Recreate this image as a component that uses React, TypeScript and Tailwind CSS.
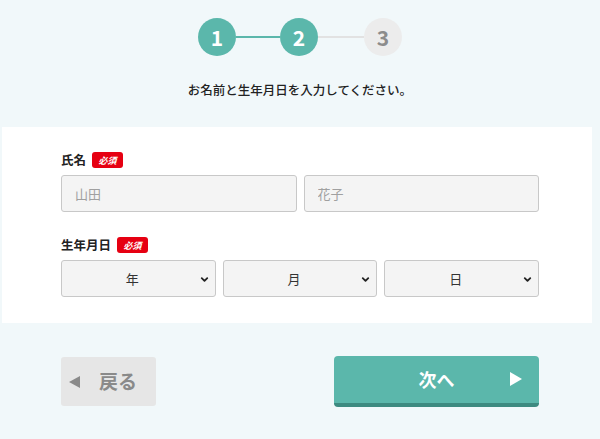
import { ChevronDown } from 'lucide-react'

const FONT = "font-['Noto_Sans_CJK_JP','Noto_Sans',sans-serif]"

function Step({ n, active }: { n: number; active: boolean }) {
  return (
    <div
      className={`w-[38px] h-[38px] rounded-full flex items-center justify-center text-[21px] font-bold leading-none ${
        active ? 'bg-[#5bb7ab] text-white' : 'bg-[#ececec] text-[#8c8c8c]'
      }`}
    >
      {n}
    </div>
  )
}

function Badge() {
  return (
    <span className="inline-flex items-center justify-center h-[16px] w-[31px] rounded-[3px] bg-[#e60012] text-white text-[9px] font-bold italic leading-none">
      必須
    </span>
  )
}

function Select({ label }: { label: string }) {
  return (
    <div className="relative flex-1">
      <select className="w-full h-[37px] appearance-none rounded-[3px] border border-[#c8c8c8] bg-[#f4f4f4] pr-[12px] text-[13px] text-[#333] text-center [text-align-last:center] outline-none">
        <option>{label}</option>
      </select>
      <ChevronDown
        size={11}
        strokeWidth={4}
        className="absolute right-[6px] top-[14px] text-[#222] pointer-events-none"
      />
    </div>
  )
}

export default function App() {
  return (
    <div className={`w-[600px] h-[439px] bg-[#f1f8fa] ${FONT} text-[#222] flex flex-col`}>
      <div className="pt-[18px] flex items-center justify-center">
        <Step n={1} active />
        <div className="w-[44px] h-[2px] bg-[#5bb7ab]" />
        <Step n={2} active />
        <div className="w-[46px] h-[2px] bg-[#e2e2e2]" />
        <Step n={3} active={false} />
      </div>
      <p className="mt-[25px] text-center text-[12.5px] font-medium leading-[18px]">
        お名前と生年月日を入力してください。
      </p>

      <div className="mt-[28px] ml-[2px] mr-[8px] h-[196px] bg-white pl-[59px] pr-[53px] pt-[24px]">
        <div className="flex items-center gap-[6px] h-[18px]">
          <span className="text-[12.5px] font-bold">氏名</span>
          <Badge />
        </div>
        <div className="mt-[6px] flex gap-[7px]">
          <input
            placeholder="山田"
            className="flex-1 min-w-0 h-[37px] rounded-[3px] border border-[#c8c8c8] bg-[#f4f4f4] px-[13px] text-[13px] placeholder:text-[#a0a0a0] outline-none"
          />
          <input
            placeholder="花子"
            className="flex-1 min-w-0 h-[37px] rounded-[3px] border border-[#c8c8c8] bg-[#f4f4f4] px-[13px] text-[13px] placeholder:text-[#a0a0a0] outline-none"
          />
        </div>

        <div className="mt-[24px] flex items-center gap-[6px] h-[18px]">
          <span className="text-[12.5px] font-bold">生年月日</span>
          <Badge />
        </div>
        <div className="mt-[6px] flex gap-[7px]">
          <Select label="年" />
          <Select label="月" />
          <Select label="日" />
        </div>
      </div>

      <div className="mt-[33px] pl-[61px] pr-[61px] flex items-start justify-between">
        <button className="mt-[1px] w-[95px] h-[49px] rounded-[3px] bg-[#e6e6e6] text-[#8a8a8a] flex items-center pl-[8px]">
          <svg width="11" height="12" viewBox="0 0 11 12" className="mr-[19px]">
            <polygon points="11,0 11,12 0,6" fill="#8a8a8a" />
          </svg>
          <span className="text-[19px] font-bold">戻る</span>
        </button>
        <button className="relative w-[205px] h-[51px] rounded-[4px] bg-[#5bb7ab] border-b-[4px] border-[#3d8a80] text-white flex items-center justify-center">
          <span className="text-[18px] font-bold">次へ</span>
          <svg width="12" height="14" viewBox="0 0 12 14" className="absolute right-[17px] top-[16px]">
            <polygon points="0,0 12,7 0,14" fill="#ffffff" />
          </svg>
        </button>
      </div>
    </div>
  )
}
